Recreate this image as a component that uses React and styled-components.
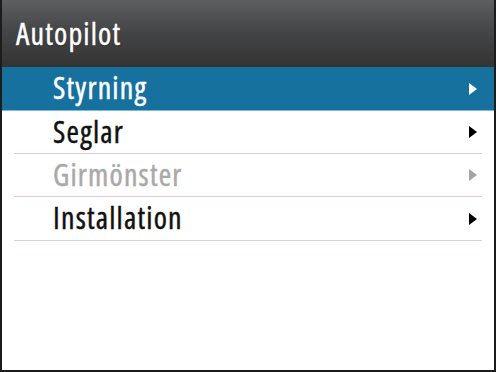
import React from "react";
import styled, { createGlobalStyle } from "styled-components";

const Global = createGlobalStyle`
  html, body { margin: 0; padding: 0; background: #ffffff; }
  * { box-sizing: border-box; }
`;

const Frame = styled.div`
  width: 496px;
  height: 372px;
  border: 2px solid #1c1c1c;
  border-top: none;
  background: #ffffff;
  display: flex;
  flex-direction: column;
  overflow: hidden;
  font-family: "Open Sans", "Noto Sans", sans-serif;
  font-stretch: 75%;
  letter-spacing: 1.2px;
  -webkit-text-stroke: 0.45px currentColor;
`;

const Header = styled.div`
  height: 67px;
  flex: none;
  display: flex;
  align-items: center;
  padding: 0 0 0 14px;
  background: linear-gradient(#5e5f61 0%, #454647 45%, #333333 100%);
  color: #ffffff;
  font-size: 30px;
  font-weight: 500;
  line-height: 1;
  text-shadow: 0 1px 1px rgba(0, 0, 0, 0.5);
`;

const Menu = styled.div`
  display: flex;
  flex-direction: column;
`;

const Row = styled.div`
  height: ${(p) => p.$h}px;
  display: flex;
  align-items: center;
  margin: ${(p) => (p.$selected ? "0" : "0 12px")};
  padding-left: ${(p) => (p.$selected ? "51px" : "39px")};
  padding-right: ${(p) => (p.$selected ? "17px" : "5px")};
  background: ${(p) => (p.$selected ? "#17719f" : "transparent")};
  border-bottom: 1px solid ${(p) => (p.$selected ? "#7cb8da" : "#e2cbd2")};
  color: ${(p) => (p.$selected ? "#ffffff" : p.$disabled ? "#a9a9a9" : "#111111")};
  font-size: 30px;
  font-weight: 500;
`;

const Label = styled.span`
  flex: 1;
  line-height: 1;
  padding-bottom: 1px;
`;

const Arrow = styled.span`
  width: 0;
  height: 0;
  border-top: 6px solid transparent;
  border-bottom: 6px solid transparent;
  border-left: 8px solid
    ${(p) => (p.$selected ? "#ffffff" : p.$disabled ? "#a3a3a3" : "#000000")};
`;

const items = [
  { label: "Styrning", selected: true, h: 44 },
  { label: "Seglar", h: 43 },
  { label: "Girmönster", disabled: true, h: 43 },
  { label: "Installation", h: 44 },
];

export default function App() {
  return (
    <>
      <Global />
      <Frame>
        <Header>Autopilot</Header>
        <Menu>
          {items.map((it) => (
            <Row key={it.label} $h={it.h} $selected={it.selected} $disabled={it.disabled}>
              <Label>{it.label}</Label>
              <Arrow $selected={it.selected} $disabled={it.disabled} />
            </Row>
          ))}
        </Menu>
      </Frame>
    </>
  );
}
